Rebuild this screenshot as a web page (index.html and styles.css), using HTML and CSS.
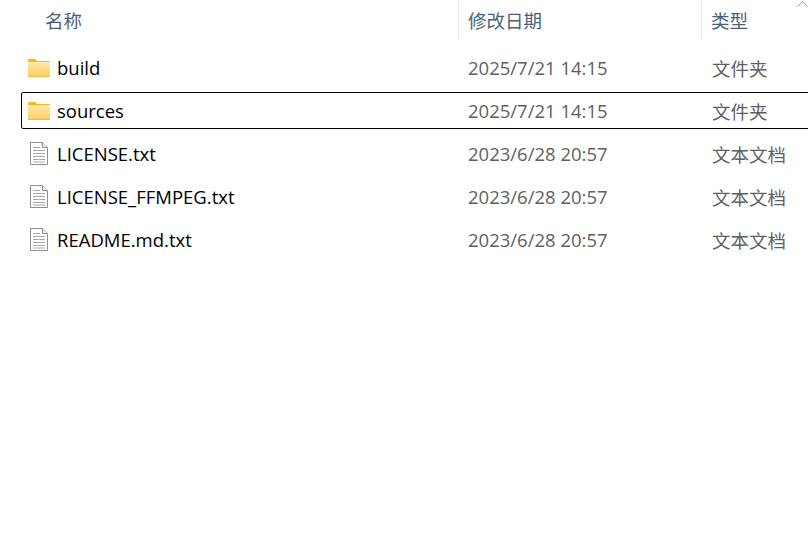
FILE: index.html
```html
<!DOCTYPE html>
<html lang="zh">
<head>
<meta charset="utf-8">
<title>文件列表</title>
<link rel="stylesheet" href="styles.css">
</head>
<body>
<svg class="defs" width="0" height="0" aria-hidden="true">
  <defs>
    <linearGradient id="folderFill" x1="0" y1="0" x2="0" y2="1">
      <stop offset="0" stop-color="#ffe9a6"/>
      <stop offset="1" stop-color="#fccf5e"/>
    </linearGradient>
    <symbol id="folder" viewBox="0 0 22 18">
      <path d="M0 1.5C0 .7.6 0 1.4 0h5.2c.5 0 .8.2 1.1.5L9.4 2H22v3H0z" fill="#fbb61e"/>
      <rect x="0" y="3.2" width="22" height="14.8" fill="url(#folderFill)"/>
      <rect x="0" y="17" width="22" height="1" fill="#f4b63c"/>
      <rect x="0" y="3.2" width="22" height="1" fill="#fff1c4"/>
    </symbol>
    <symbol id="doc" viewBox="0 0 18 23">
      <path d="M.5.5h12l5 5v17H.5z" fill="#fff" stroke="#8f8f8f"/>
      <path d="M12.5.5v5h5" fill="#ececec" stroke="#8f8f8f"/>
      <path d="M3 5.5h7M3 8.5h12M3 11.5h12M3 14.5h12M3 17.5h12M3 20h12" stroke="#a8a8a8" fill="none"/>
    </symbol>
  </defs>
</svg>
<main class="list">
  <header class="head">
    <div class="head-cell head-name">名称</div>
    <div class="head-cell head-divided">修改日期</div>
    <div class="head-cell head-divided head-type">类型
      <svg class="sort" viewBox="0 0 11 6" width="11" height="6" aria-hidden="true"><path d="M.5 5.5l5-5 5 5" fill="none" stroke="#9a9a9a"/></svg>
    </div>
  </header>
  <div class="rows">
    <div class="row">
      <div class="name"><svg class="icon-folder"><use href="#folder"/></svg><span>build</span></div>
      <div class="meta">2025/7/21 14:15</div><div class="meta type">文件夹</div>
    </div>
    <div class="row selected">
      <div class="name"><svg class="icon-folder"><use href="#folder"/></svg><span>sources</span></div>
      <div class="meta">2025/7/21 14:15</div><div class="meta type">文件夹</div>
    </div>
    <div class="row">
      <div class="name"><svg class="icon-doc"><use href="#doc"/></svg><span>LICENSE.txt</span></div>
      <div class="meta">2023/6/28 20:57</div><div class="meta type">文本文档</div>
    </div>
    <div class="row">
      <div class="name"><svg class="icon-doc"><use href="#doc"/></svg><span>LICENSE_FFMPEG.txt</span></div>
      <div class="meta">2023/6/28 20:57</div><div class="meta type">文本文档</div>
    </div>
    <div class="row">
      <div class="name"><svg class="icon-doc"><use href="#doc"/></svg><span>README.md.txt</span></div>
      <div class="meta">2023/6/28 20:57</div><div class="meta type">文本文档</div>
    </div>
  </div>
</main>
</body>
</html>
```
FILE: styles.css
```css
html, body {
  margin: 0;
  padding: 0;
  background: #fff;
  overflow: hidden;
}
body {
  width: 808px;
  height: 556px;
  font-family: "Open Sans", "Noto Sans CJK SC", sans-serif;
  font-size: 18.5px;
}
.defs { display: block; height: 0; }
.list { width: 808px; overflow: hidden; }
.head {
  display: grid;
  grid-template-columns: 458px 243px 1fr;
  height: 40px;
  color: #4c607a;
}
.head-cell {
  display: flex;
  align-items: center;
  height: 40px;
  padding-left: 9px;
  box-sizing: border-box;
  position: relative;
}
.head-name { padding-left: 45px; }
.head-divided { border-left: 1px solid #e5e5e5; }
.sort { position: absolute; top: 1px; right: 0; }
.rows {
  display: flex;
  flex-direction: column;
  gap: 6px;
  padding: 9px 0 0 21px;
}
.row {
  display: grid;
  grid-template-columns: 437px 243px 120px;
  height: 37px;
  width: 820px;
  box-sizing: border-box;
  align-items: center;
  border: 1px solid transparent;
  border-radius: 2px;
}
.selected { border-color: #000; }
.name {
  display: flex;
  align-items: center;
  padding-left: 6px;
  color: #000;
}
.name span { margin-left: 7px; }
.icon-folder { width: 22px; height: 18px; flex: none; }
.icon-doc { width: 18px; height: 23px; margin: 0 2px 0 2px; flex: none; }
.meta { padding-left: 9px; color: #5f5f5f; }
.type { padding-left: 10px; }
```
